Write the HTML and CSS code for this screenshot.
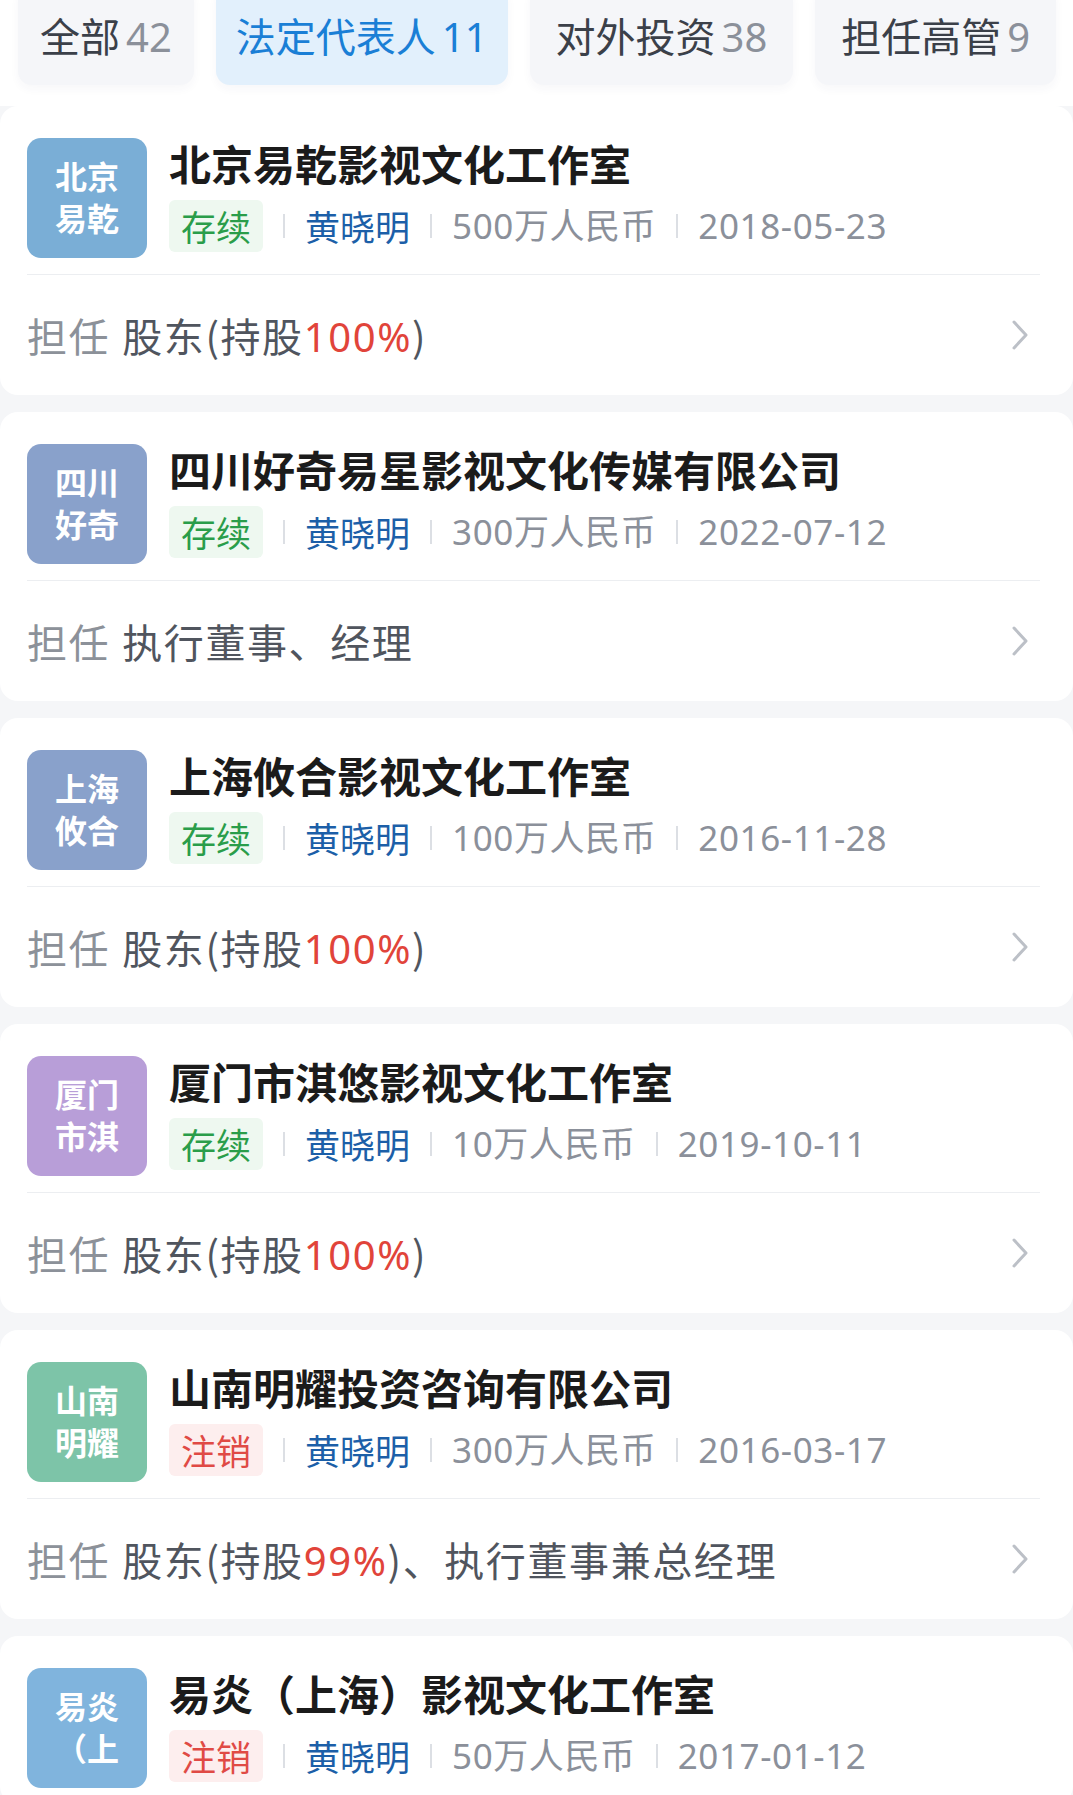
FILE: index.html
```html
<!DOCTYPE html>
<html lang="zh-CN">
<head>
    <meta charset="UTF-8">
    <meta name="viewport" content="width=device-width, initial-scale=1.0">
    <title>黄晓明 - 关联企业</title>
    <link rel="stylesheet" href="styles.css">
</head>
<body>
    <div class="tabs">
        <div class="tab">全部<span class="num">42</span></div>
        <div class="tab active">法定代表人<span class="num">11</span></div>
        <div class="tab">对外投资<span class="num">38</span></div>
        <div class="tab">担任高管<span class="num">9</span></div>
    </div>

    <div class="list">
        <div class="card">
            <div class="head">
                <div class="logo logo-blue">北京<br>易乾</div>
                <div class="info">
                    <div class="name">北京易乾影视文化工作室</div>
                    <div class="meta">
                        <span class="status ok">存续</span>
                        <span class="sep"></span>
                        <span class="person">黄晓明</span>
                        <span class="sep"></span>
                        <span class="muted">500万人民币</span>
                        <span class="sep"></span>
                        <span class="muted">2018-05-23</span>
                    </div>
                </div>
            </div>
            <div class="role">
                <span><span class="label">担任</span>股东(持股<span class="pct">100%</span>)</span>
                <svg class="arrow" width="20" height="32" viewBox="0 0 20 32"><polyline points="4,3 16,16 4,29" /></svg>
            </div>
        </div>

        <div class="card">
            <div class="head">
                <div class="logo logo-slate">四川<br>好奇</div>
                <div class="info">
                    <div class="name">四川好奇易星影视文化传媒有限公司</div>
                    <div class="meta">
                        <span class="status ok">存续</span>
                        <span class="sep"></span>
                        <span class="person">黄晓明</span>
                        <span class="sep"></span>
                        <span class="muted">300万人民币</span>
                        <span class="sep"></span>
                        <span class="muted">2022-07-12</span>
                    </div>
                </div>
            </div>
            <div class="role">
                <span><span class="label">担任</span>执行董事、经理</span>
                <svg class="arrow" width="20" height="32" viewBox="0 0 20 32"><polyline points="4,3 16,16 4,29" /></svg>
            </div>
        </div>

        <div class="card">
            <div class="head">
                <div class="logo logo-slate">上海<br>攸合</div>
                <div class="info">
                    <div class="name">上海攸合影视文化工作室</div>
                    <div class="meta">
                        <span class="status ok">存续</span>
                        <span class="sep"></span>
                        <span class="person">黄晓明</span>
                        <span class="sep"></span>
                        <span class="muted">100万人民币</span>
                        <span class="sep"></span>
                        <span class="muted">2016-11-28</span>
                    </div>
                </div>
            </div>
            <div class="role">
                <span><span class="label">担任</span>股东(持股<span class="pct">100%</span>)</span>
                <svg class="arrow" width="20" height="32" viewBox="0 0 20 32"><polyline points="4,3 16,16 4,29" /></svg>
            </div>
        </div>

        <div class="card">
            <div class="head">
                <div class="logo logo-purple">厦门<br>市淇</div>
                <div class="info">
                    <div class="name">厦门市淇悠影视文化工作室</div>
                    <div class="meta">
                        <span class="status ok">存续</span>
                        <span class="sep"></span>
                        <span class="person">黄晓明</span>
                        <span class="sep"></span>
                        <span class="muted">10万人民币</span>
                        <span class="sep"></span>
                        <span class="muted">2019-10-11</span>
                    </div>
                </div>
            </div>
            <div class="role">
                <span><span class="label">担任</span>股东(持股<span class="pct">100%</span>)</span>
                <svg class="arrow" width="20" height="32" viewBox="0 0 20 32"><polyline points="4,3 16,16 4,29" /></svg>
            </div>
        </div>

        <div class="card">
            <div class="head">
                <div class="logo logo-green">山南<br>明耀</div>
                <div class="info">
                    <div class="name">山南明耀投资咨询有限公司</div>
                    <div class="meta">
                        <span class="status closed">注销</span>
                        <span class="sep"></span>
                        <span class="person">黄晓明</span>
                        <span class="sep"></span>
                        <span class="muted">300万人民币</span>
                        <span class="sep"></span>
                        <span class="muted">2016-03-17</span>
                    </div>
                </div>
            </div>
            <div class="role">
                <span><span class="label">担任</span>股东(持股<span class="pct">99%</span>)、执行董事兼总经理</span>
                <svg class="arrow" width="20" height="32" viewBox="0 0 20 32"><polyline points="4,3 16,16 4,29" /></svg>
            </div>
        </div>

        <div class="card">
            <div class="head">
                <div class="logo logo-sky">易炎<br>（上</div>
                <div class="info">
                    <div class="name">易炎（上海）影视文化工作室</div>
                    <div class="meta">
                        <span class="status closed">注销</span>
                        <span class="sep"></span>
                        <span class="person">黄晓明</span>
                        <span class="sep"></span>
                        <span class="muted">50万人民币</span>
                        <span class="sep"></span>
                        <span class="muted">2017-01-12</span>
                    </div>
                </div>
            </div>
        </div>
    </div>
</body>
</html>
```

FILE: styles.css
```css
body {
    margin: 0;
    font-family: "Noto Sans CJK SC", "Noto Sans", sans-serif;
    background-color: #ffffff;
    color: #1b1b1b;
}

/* tab strip, page is scrolled a little so the tops are cut off */
.tabs {
    display: flex;
    gap: 22px;
    padding-left: 18px;
    margin-top: -14px;
}
.tab {
    height: 99px;
    line-height: 99px;
    padding: 0 22px;
    font-size: 40px;
    color: #3b4049;
    background-color: #f5f6f9;
    border-radius: 14px;
    box-shadow: 0 4px 10px rgba(40, 60, 90, 0.04);
    white-space: nowrap;
}
.tab .num {
    margin-left: 6px;
    font-family: "Noto Sans", "Noto Sans CJK SC", sans-serif;
    color: #8b909a;
}
.tab.active {
    padding: 0 20px;
    background-color: #e2f0fc;
    color: #1a7fd6;
}
.tab.active .num {
    color: #1a7fd6;
}
.tab:nth-child(3),
.tab:nth-child(4) {
    padding: 0 26px;
}

.list {
    margin-top: 21px;
    display: flex;
    flex-direction: column;
    gap: 17px;
    background-color: #f5f6f8;
}
.card {
    background-color: #ffffff;
    border-radius: 18px;
    padding: 32px 33px 0 27px;
}
.head {
    display: flex;
    gap: 22px;
    padding-bottom: 16px;
}
.logo {
    flex: none;
    width: 120px;
    height: 120px;
    padding-bottom: 4px;
    box-sizing: border-box;
    border-radius: 14px;
    display: flex;
    align-items: center;
    justify-content: center;
    text-align: center;
    color: #ffffff;
    font-size: 32px;
    line-height: 42px;
    font-weight: bold;
}
.logo-blue { background-color: #7aaed6; }
.logo-slate { background-color: #89a1cb; }
.logo-purple { background-color: #b89ed8; }
.logo-green { background-color: #7dc4a8; }
.logo-sky { background-color: #80b4dd; }

.info {
    min-width: 0;
}
.name {
    margin-top: -2px;
    font-size: 42px;
    line-height: 54px;
    font-weight: bold;
    color: #1b1b1b;
    white-space: nowrap;
}
.meta {
    margin-top: 10px;
    display: flex;
    align-items: center;
    gap: 20px;
    font-size: 35px;
    line-height: 52px;
    white-space: nowrap;
}
.status {
    padding: 0 12px;
    border-radius: 6px;
}
.status.ok {
    color: #2a9d4a;
    background-color: #eef8f0;
}
.status.closed {
    color: #e04a45;
    background-color: #fdeeee;
}
.sep {
    width: 2px;
    height: 24px;
    background-color: #dcdfe4;
}
.person {
    color: #1c5fa8;
}
.muted {
    font-family: "Noto Sans", "Noto Sans CJK SC", sans-serif;
    letter-spacing: 0.6px;
    color: #8b909a;
}

.role {
    height: 120px;
    border-top: 1px solid #eceef1;
    display: flex;
    align-items: center;
    justify-content: space-between;
    font-size: 40px;
    letter-spacing: 1.6px;
    color: #50555e;
}
.role .label {
    margin-right: 12px;
    color: #8c9199;
}
.role .pct {
    font-family: "Noto Sans", "Noto Sans CJK SC", sans-serif;
    color: #e1443a;
}
.arrow {
    margin-right: 10px;
    fill: none;
    stroke: #bcc0c7;
    stroke-width: 3;
    stroke-linecap: round;
    stroke-linejoin: round;
}
```
